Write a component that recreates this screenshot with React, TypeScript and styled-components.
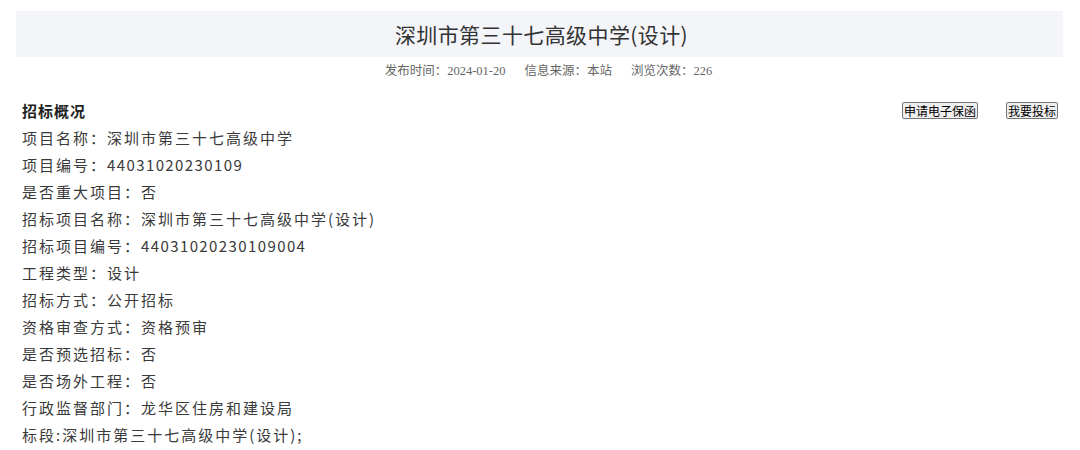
import React from "react";
import styled, { createGlobalStyle } from "styled-components";

const GlobalStyle = createGlobalStyle`
  html, body {
    margin: 0;
    padding: 0;
    background: #fff;
  }
  body {
    font-family: "Noto Sans CJK SC", "Noto Sans", sans-serif;
    color: #333;
  }
`;

type Field = { label: string; value: string; numeric?: boolean };

const fields: Field[] = [
  { label: "项目名称：", value: "深圳市第三十七高级中学" },
  { label: "项目编号：", value: "44031020230109", numeric: true },
  { label: "是否重大项目：", value: "否" },
  { label: "招标项目名称：", value: "深圳市第三十七高级中学(设计)" },
  { label: "招标项目编号：", value: "44031020230109004", numeric: true },
  { label: "工程类型：", value: "设计" },
  { label: "招标方式：", value: "公开招标" },
  { label: "资格审查方式：", value: "资格预审" },
  { label: "是否预选招标：", value: "否" },
  { label: "是否场外工程：", value: "否" },
  { label: "行政监督部门：", value: "龙华区住房和建设局" },
  { label: "标段:", value: "深圳市第三十七高级中学(设计);" },
];

const meta = [
  { label: "发布时间：", value: "2024-01-20" },
  { label: "信息来源：", value: "本站" },
  { label: "浏览次数：", value: "226" },
];

const App = () => {
  return (
    <>
      <GlobalStyle />
      <Page>
        <TitleBar>深圳市第三十七高级中学(设计)</TitleBar>
        <MetaLine>
          {meta.map((m) => (
            <MetaItem key={m.label}>
              {m.label}
              {m.value}
            </MetaItem>
          ))}
        </MetaLine>

        <Section>
          <SectionHead>
            <SectionTitle>招标概况</SectionTitle>
            <Actions>
              <ActionButton type="button">申请电子保函</ActionButton>
              <ActionButton type="button">我要投标</ActionButton>
            </Actions>
          </SectionHead>
          {fields.map((f) => (
            <Row key={f.label}>
              {f.label}
              {f.numeric ? <Num>{f.value}</Num> : f.value}
            </Row>
          ))}
        </Section>
      </Page>
    </>
  );
};

export default App;

const Page = styled.div`
  padding: 11px 17px 0 16px;
`;

const TitleBar = styled.h1`
  margin: 0;
  height: 46px;
  display: flex;
  align-items: center;
  justify-content: center;
  padding-left: 4px;
  background: #f3f5f9;
  font-size: 21px;
  font-weight: 400;
  color: #333;
  letter-spacing: 0.4px;
`;

const MetaLine = styled.div`
  margin-top: 2px;
  height: 20px;
  display: flex;
  justify-content: center;
  align-items: center;
  gap: 19px;
  padding-left: 18px;
  font-family: "Liberation Serif", "Noto Sans CJK SC", serif;
  font-size: 12.5px;
  color: #666;
`;

const MetaItem = styled.span`
  white-space: nowrap;
`;

const Section = styled.div`
  margin-top: 18px;
  padding: 0 5px 0 6px;
`;

const SectionHead = styled.div`
  height: 27px;
  display: flex;
  align-items: center;
  justify-content: space-between;
`;

const SectionTitle = styled.h3`
  margin: 0;
  font-size: 15px;
  font-weight: 700;
  letter-spacing: 1px;
  color: #222;
`;

const Actions = styled.div`
  display: flex;
  gap: 28px;
`;

const ActionButton = styled.button`
  height: 17px;
  padding: 0 1px;
  font-family: "Noto Sans CJK SC", sans-serif;
  font-size: 12px;
  line-height: 15px;
  color: #000;
  background: #efefef;
  border: 1px solid #767676;
  border-radius: 2px;
  cursor: pointer;
`;

const Row = styled.div`
  height: 27px;
  line-height: 27px;
  font-size: 15px;
  letter-spacing: 2px;
  color: #3a3a3a;
  white-space: nowrap;
`;

const Num = styled.span`
  letter-spacing: 1.4px;
`;
